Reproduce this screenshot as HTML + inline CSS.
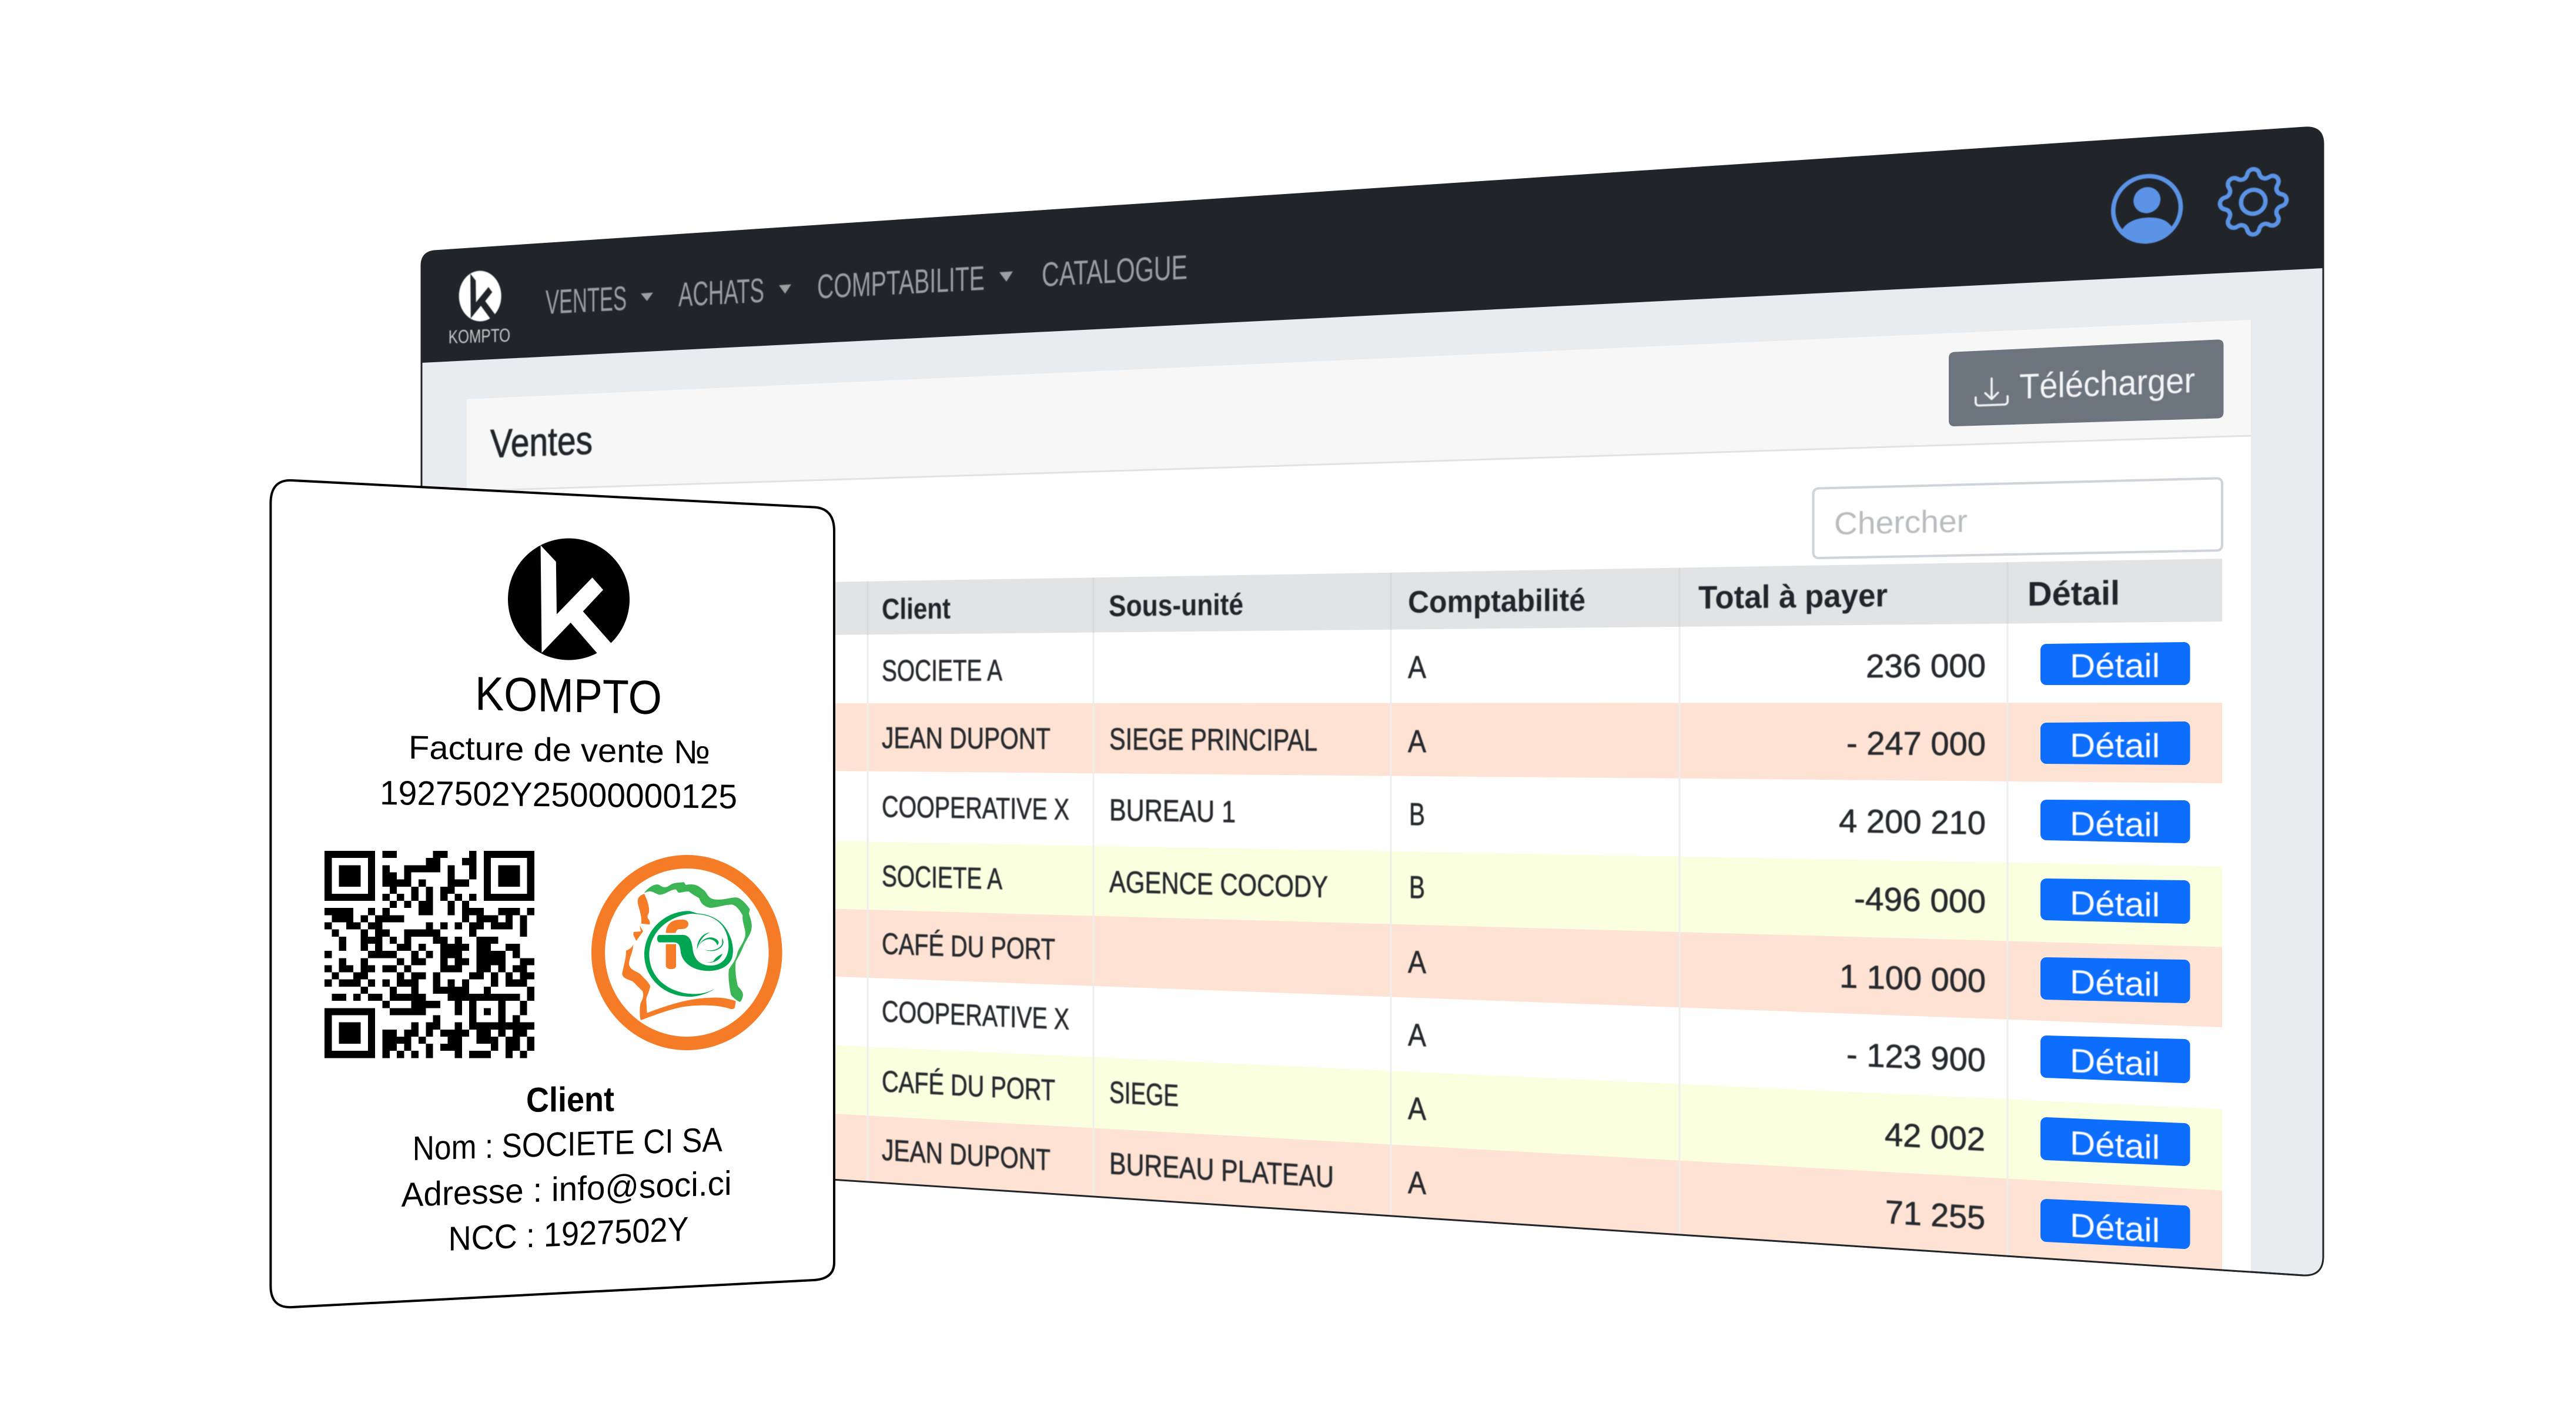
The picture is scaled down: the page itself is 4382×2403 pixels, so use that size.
<!DOCTYPE html>
<html lang="fr">
<head>
<meta charset="utf-8">
<title>Kompto</title>
<style>
html,body{margin:0;padding:0;background:#fff;width:4382px;height:2403px;overflow:hidden}
svg{display:block;position:absolute;left:0;top:0}
text{font-family:"Liberation Sans",Arial,sans-serif}
.soft{filter:blur(.9px)}
.nav{fill:#9c9ea0;font-size:58px}
.th{fill:#212529;font-weight:700}
.td{fill:#26292d;stroke:#26292d;stroke-width:.7px}
.btn{fill:#0d6efd;stroke:#0d6efd;stroke-width:20;stroke-linejoin:round}
.bt{fill:#fff;font-size:57px}
.cd{fill:#000}
</style>
</head>
<body>
<svg width="4382" height="2403" viewBox="0 0 4382 2403" xmlns="http://www.w3.org/2000/svg">
<!-- window -->
<path d="M717,452 Q717,430 738,427 L3921,217 Q3951,215 3952,243 L3952,2137 Q3952,2170 3919,2169 L717,1960 Z" fill="#e9ecef" stroke="#212529" stroke-width="3"/>
<path d="M717,452 Q717,430 738,427 L3921,217 Q3951,215 3952,243 L3952,456 L717,617 Z" fill="#212529"/>

<!-- card -->
<polygon points="794,679 3829,544 3829,2162 794,1965" fill="#fff"/>
<polygon points="794,679 3829,544 3829,741 794,835" fill="#f7f7f7"/>
<line x1="794" y1="835" x2="3829" y2="741" stroke="#e2e2e2" stroke-width="3"/>

<!-- table rows -->
<polygon points="1400,990 3780,950 3780,1057 1400,1080" fill="#e2e3e5"/>
<polygon points="1400,1196 3780,1195 3780,1332 1400,1311" fill="#fee2d3"/>
<polygon points="1400,1430 3780,1473.5 3780,1610.4 1400,1545" fill="#faffe0"/>
<polygon points="1400,1545 3780,1610.4 3780,1747 1400,1660" fill="#fee2d3"/>
<polygon points="1400,1776.5 3780,1886 3780,2024.6 1400,1893" fill="#faffe0"/>
<polygon points="1400,1893 3780,2024.6 3780,2159 1400,2006" fill="#fee2d3"/>

<!-- column lines -->
<g stroke-width="3">
<g stroke="#d9dadc">
<line x1="1476" y1="989" x2="1476" y2="1080"/>
<line x1="1860" y1="982.5" x2="1860" y2="1076"/>
<line x1="2366" y1="974" x2="2366" y2="1071"/>
<line x1="2857" y1="965.6" x2="2857" y2="1066"/>
<line x1="3415" y1="956" x2="3415" y2="1060.5"/>
</g>
<g stroke="#eeeeee">
<line x1="1476" y1="1080" x2="1476" y2="2009"/>
<line x1="1860" y1="1076" x2="1860" y2="2034"/>
<line x1="2366" y1="1071" x2="2366" y2="2067"/>
<line x1="2857" y1="1066" x2="2857" y2="2099"/>
<line x1="3415" y1="1060.5" x2="3415" y2="2135"/>
</g>
</g>
<!-- bottom border redraw -->
<line x1="1400" y1="2005" x2="3919" y2="2169" stroke="#212529" stroke-width="3"/>

<!-- download button -->
<path d="M3325,598.5 L3772,577.5 Q3782.5,577 3782.5,587 L3782.5,701 Q3782.5,711 3772,711.5 L3325,725 Q3315,725.3 3315,715 L3315,609 Q3315,599 3325,598.5 Z" fill="#6c757d"/>

<!-- search input -->
<path d="M3094,830.5 L3770,813.5 Q3780,813 3780,823 L3780,926 Q3780,936 3770,936.3 L3094,949 Q3084.5,949 3084.5,939 L3084.5,841 Q3084.5,831 3094,830.5 Z" fill="#fff" stroke="#ced4da" stroke-width="4"/>

<!-- detail buttons -->
<polygon class="btn" points="3481,1105 3715.5,1102 3715.5,1155 3481,1155"/>
<polygon class="btn" points="3481,1239 3715.5,1237 3715.5,1291 3481,1289"/>
<polygon class="btn" points="3481,1370 3715.5,1371 3715.5,1424 3481,1419"/>
<polygon class="btn" points="3481,1504 3715.5,1507 3715.5,1561 3481,1555"/>
<polygon class="btn" points="3481,1638 3715.5,1642 3715.5,1696 3481,1690"/>
<polygon class="btn" points="3481,1771 3715.5,1777 3715.5,1832 3481,1823"/>
<polygon class="btn" points="3481,1910 3715.5,1920 3715.5,1973 3481,1963"/>
<polygon class="btn" points="3481,2049 3715.5,2060 3715.5,2114 3481,2102"/>

<g class="soft">
<!-- nav logo -->
<ellipse cx="816.7" cy="503.5" rx="36" ry="43" fill="#fff"/>
<g transform="translate(816.7,503.5) scale(.35,.415) translate(-967,-1019)">
<polygon fill="#212529" points="919.6,927.2 945.8,955.3 947,1044.6 1007.6,982.1 1026,1003.1 991.7,1039.7 1040.2,1094.6 1017.2,1112.5 970.7,1058.9 921.5,1110.2"/>
</g>
<text transform="matrix(1 -.03 0 1 762.7 584)" font-size="32" fill="#c8c8c8" textLength="105.5" lengthAdjust="spacingAndGlyphs">KOMPTO</text>

<!-- nav items -->
<text class="nav" transform="matrix(1 -.052 0 1 928 534)" textLength="138" lengthAdjust="spacingAndGlyphs">VENTES</text>
<polygon points="1090,499 1111,497.5 1100.5,512" fill="#9c9ea0"/>
<text class="nav" transform="matrix(1 -.052 0 1 1154 521)" textLength="146" lengthAdjust="spacingAndGlyphs">ACHATS</text>
<polygon points="1325,485 1346,483.5 1335.5,499.5" fill="#9c9ea0"/>
<text class="nav" transform="matrix(1 -.052 0 1 1390 507.5)" textLength="285" lengthAdjust="spacingAndGlyphs">COMPTABILITE</text>
<polygon points="1700,463 1723,461.5 1712,479" fill="#9c9ea0"/>
<text class="nav" transform="matrix(1 -.052 0 1 1772 487)" textLength="248" lengthAdjust="spacingAndGlyphs">CATALOGUE</text>

<!-- profile + gear -->
<g fill="#5b93e6" transform="matrix(7.65 -.44 0 7.4 3591 299.5)">
<path d="M11 6a3 3 0 1 1-6 0 3 3 0 0 1 6 0z"/>
<path fill-rule="evenodd" d="M0 8a8 8 0 1 1 16 0A8 8 0 0 1 0 8zm8-7a7 7 0 0 0-5.468 11.37C3.242 11.226 4.805 10 8 10s4.757 1.225 5.468 2.37A7 7 0 0 0 8 1z"/>
</g>
<g fill="#5b93e6" transform="matrix(7.55 -.44 0 7.4 3772.6 287.5)">
<path d="M8 4.754a3.246 3.246 0 1 0 0 6.492 3.246 3.246 0 0 0 0-6.492zM5.754 8a2.246 2.246 0 1 1 4.492 0 2.246 2.246 0 0 1-4.492 0z"/>
<path d="M9.796 1.343c-.527-1.79-3.065-1.79-3.592 0l-.094.319a.873.873 0 0 1-1.255.52l-.292-.16c-1.64-.892-3.433.902-2.54 2.541l.159.292a.873.873 0 0 1-.52 1.255l-.319.094c-1.79.527-1.79 3.065 0 3.592l.319.094a.873.873 0 0 1 .52 1.255l-.16.292c-.892 1.64.901 3.434 2.541 2.54l.292-.159a.873.873 0 0 1 1.255.52l.094.319c.527 1.79 3.065 1.79 3.592 0l.094-.319a.873.873 0 0 1 1.255-.52l.292.16c1.64.893 3.434-.902 2.54-2.541l-.159-.292a.873.873 0 0 1 .52-1.255l.319-.094c1.79-.527 1.79-3.065 0-3.592l-.319-.094a.873.873 0 0 1-.52-1.255l.16-.292c.893-1.64-.902-3.433-2.541-2.54l-.292.159a.873.873 0 0 1-1.255-.52l-.094-.319zm-2.633.283c.246-.835 1.428-.835 1.674 0l.094.319a1.873 1.873 0 0 0 2.693 1.115l.291-.16c.764-.415 1.6.42 1.184 1.185l-.159.292a1.873 1.873 0 0 0 1.116 2.692l.318.094c.835.246.835 1.428 0 1.674l-.319.094a1.873 1.873 0 0 0-1.115 2.693l.16.291c.415.764-.42 1.6-1.185 1.184l-.291-.159a1.873 1.873 0 0 0-2.693 1.116l-.094.318c-.246.835-1.428.835-1.674 0l-.094-.319a1.873 1.873 0 0 0-2.692-1.115l-.292.16c-.764.415-1.6-.42-1.184-1.185l.159-.291A1.873 1.873 0 0 0 1.945 8.93l-.319-.094c-.835-.246-.835-1.428 0-1.674l.319-.094A1.873 1.873 0 0 0 3.06 4.377l-.16-.292c-.415-.764.42-1.6 1.185-1.184l.292.159a1.873 1.873 0 0 0 2.692-1.115l.094-.319z"/>
</g>

<!-- titles -->
<text transform="matrix(1 -.036 0 1 834 778)" font-size="68" fill="#212529" stroke="#212529" stroke-width="1" textLength="174" lengthAdjust="spacingAndGlyphs">Ventes</text>

<!-- download -->
<g fill="#f2f3f4" transform="matrix(3.62 -.135 0 3.5 3359 639.5)">
<path d="M.5 9.9a.5.5 0 0 1 .5.5v2.5a1 1 0 0 0 1 1h12a1 1 0 0 0 1-1v-2.5a.5.5 0 0 1 1 0v2.5a2 2 0 0 1-2 2H2a2 2 0 0 1-2-2v-2.5a.5.5 0 0 1 .5-.5z"/>
<path d="M7.646 11.854a.5.5 0 0 0 .708 0l3-3a.5.5 0 0 0-.708-.708L8.5 10.293V1.5a.5.5 0 0 0-1 0v8.793L5.354 8.146a.5.5 0 1 0-.708.708l3 3z"/>
</g>
<text transform="matrix(1 -.0365 0 1 3435 678)" font-size="60" fill="#f4f5f6" textLength="299" lengthAdjust="spacingAndGlyphs">Télécharger</text>
<text transform="matrix(1 -.0207 0 1 3120 909)" font-size="54" fill="#b9bcbf" textLength="227" lengthAdjust="spacingAndGlyphs">Chercher</text>

<!-- header -->
<text class="th" font-size="50" transform="matrix(1 -.012 0 1 1500 1053)" textLength="117" lengthAdjust="spacingAndGlyphs">Client</text>
<text class="th" font-size="51" transform="matrix(1 -.012 0 1 1886 1048)" textLength="229" lengthAdjust="spacingAndGlyphs">Sous-unité</text>
<text class="th" font-size="53" transform="matrix(1 -.012 0 1 2395 1042)" textLength="302" lengthAdjust="spacingAndGlyphs">Comptabilité</text>
<text class="th" font-size="55" transform="matrix(1 -.012 0 1 2889 1035)" textLength="322" lengthAdjust="spacingAndGlyphs">Total à payer</text>
<text class="th" font-size="58" transform="matrix(1 -.012 0 1 3449 1030)" textLength="157" lengthAdjust="spacingAndGlyphs">Détail</text>

<!-- client col -->
<g class="td" font-size="51">
<text transform="matrix(1 -.0034 0 1 1500 1158)" textLength="205" lengthAdjust="spacingAndGlyphs">SOCIETE A</text>
<text transform="matrix(1 .0059 0 1 1500 1272)" textLength="287" lengthAdjust="spacingAndGlyphs">JEAN DUPONT</text>
<text transform="matrix(1 .0155 0 1 1500 1389)" textLength="319" lengthAdjust="spacingAndGlyphs">COOPERATIVE X</text>
<text transform="matrix(1 .0248 0 1 1500 1507)" textLength="205" lengthAdjust="spacingAndGlyphs">SOCIETE A</text>
<text transform="matrix(1 .0341 0 1 1500 1622)" textLength="295" lengthAdjust="spacingAndGlyphs">CAFÉ DU PORT</text>
<text transform="matrix(1 .0433 0 1 1500 1737)" textLength="319" lengthAdjust="spacingAndGlyphs">COOPERATIVE X</text>
<text transform="matrix(1 .0529 0 1 1500 1856)" textLength="295" lengthAdjust="spacingAndGlyphs">CAFÉ DU PORT</text>
<text transform="matrix(1 .062 0 1 1500 1972.5)" textLength="287" lengthAdjust="spacingAndGlyphs">JEAN DUPONT</text>
</g>
<!-- sous-unité col -->
<g class="td" font-size="52">
<text transform="matrix(1 .0059 0 1 1887 1274.5)" textLength="354" lengthAdjust="spacingAndGlyphs">SIEGE PRINCIPAL</text>
<text transform="matrix(1 .0155 0 1 1887 1395)" textLength="215" lengthAdjust="spacingAndGlyphs">BUREAU 1</text>
<text transform="matrix(1 .0248 0 1 1887 1517)" textLength="372" lengthAdjust="spacingAndGlyphs">AGENCE COCODY</text>
<text transform="matrix(1 .0526 0 1 1887 1875)" textLength="118" lengthAdjust="spacingAndGlyphs">SIEGE</text>
<text transform="matrix(1 .0619 0 1 1887 1996)" textLength="382" lengthAdjust="spacingAndGlyphs">BUREAU PLATEAU</text>
</g>
<!-- comptabilité col -->
<g class="td" font-size="54">
<text transform="matrix(1 -.0034 0 1 2395 1153)" textLength="31" lengthAdjust="spacingAndGlyphs">A</text>
<text transform="matrix(1 .0058 0 1 2395 1279)" textLength="31" lengthAdjust="spacingAndGlyphs">A</text>
<text transform="matrix(1 .0155 0 1 2397 1403)" textLength="27" lengthAdjust="spacingAndGlyphs">B</text>
<text transform="matrix(1 .0248 0 1 2397 1527)" textLength="27" lengthAdjust="spacingAndGlyphs">B</text>
<text transform="matrix(1 .0339 0 1 2395 1654)" textLength="31" lengthAdjust="spacingAndGlyphs">A</text>
<text transform="matrix(1 .0432 0 1 2395 1778)" textLength="31" lengthAdjust="spacingAndGlyphs">A</text>
<text transform="matrix(1 .0525 0 1 2395 1903)" textLength="31" lengthAdjust="spacingAndGlyphs">A</text>
<text transform="matrix(1 .0619 0 1 2395 2029)" textLength="31" lengthAdjust="spacingAndGlyphs">A</text>
</g>
<!-- totals -->
<g class="td" font-size="56">
<text transform="matrix(1 -.0035 0 1 3174 1152)" textLength="204" lengthAdjust="spacingAndGlyphs">236 000</text>
<text transform="matrix(1 .0058 0 1 3141 1283)" textLength="237" lengthAdjust="spacingAndGlyphs">- 247 000</text>
<text transform="matrix(1 .0155 0 1 3128 1415)" textLength="250" lengthAdjust="spacingAndGlyphs">4 200 210</text>
<text transform="matrix(1 .0248 0 1 3154 1547)" textLength="224" lengthAdjust="spacingAndGlyphs">-496 000</text>
<text transform="matrix(1 .0339 0 1 3129 1679)" textLength="249" lengthAdjust="spacingAndGlyphs">1 100 000</text>
<text transform="matrix(1 .0433 0 1 3141 1812)" textLength="237" lengthAdjust="spacingAndGlyphs">- 123 900</text>
<text transform="matrix(1 .0527 0 1 3206 1948)" textLength="171" lengthAdjust="spacingAndGlyphs">42 002</text>
<text transform="matrix(1 .062 0 1 3207 2080)" textLength="170" lengthAdjust="spacingAndGlyphs">71 255</text>
</g>
<!-- button labels -->
<text class="bt" transform="matrix(1 -.0034 0 1 3521 1152)" textLength="153" lengthAdjust="spacingAndGlyphs">Détail</text>
<text class="bt" transform="matrix(1 .0059 0 1 3521 1287)" textLength="153" lengthAdjust="spacingAndGlyphs">Détail</text>
<text class="bt" transform="matrix(1 .0155 0 1 3521 1420)" textLength="153" lengthAdjust="spacingAndGlyphs">Détail</text>
<text class="bt" transform="matrix(1 .0246 0 1 3521 1555)" textLength="153" lengthAdjust="spacingAndGlyphs">Détail</text>
<text class="bt" transform="matrix(1 .0339 0 1 3521 1689)" textLength="153" lengthAdjust="spacingAndGlyphs">Détail</text>
<text class="bt" transform="matrix(1 .0432 0 1 3521 1823)" textLength="153" lengthAdjust="spacingAndGlyphs">Détail</text>
<text class="bt" transform="matrix(1 .0527 0 1 3521 1963)" textLength="153" lengthAdjust="spacingAndGlyphs">Détail</text>
<text class="bt" transform="matrix(1 .0624 0 1 3521 2103)" textLength="153" lengthAdjust="spacingAndGlyphs">Détail</text>
</g>

<!-- invoice card -->
<path d="M460.4,856 Q460.4,815 497,817 L1384,862.5 Q1419,864 1419,903 L1419,2147 Q1419,2175 1384,2177 L497,2223 Q460.4,2225 460.4,2187 Z" fill="#fff" stroke="#000" stroke-width="4"/>

<circle cx="967.5" cy="1019" r="103.5" fill="#000"/>
<polygon fill="#fff" points="919.6,927.2 945.8,955.3 947,1044.6 1007.6,982.1 1026,1003.1 991.7,1039.7 1040.2,1094.6 1017.2,1112.5 970.7,1058.9 921.5,1110.2"/>

<text class="cd" transform="matrix(1 .0234 0 1 808 1207)" font-size="81" textLength="318" lengthAdjust="spacingAndGlyphs">KOMPTO</text>
<text class="cd" transform="matrix(1 .017 0 1 695 1290)" font-size="56" textLength="513" lengthAdjust="spacingAndGlyphs">Facture de vente №</text>
<text class="cd" transform="matrix(1 .011 0 1 646 1368)" font-size="58" textLength="608" lengthAdjust="spacingAndGlyphs">1927502Y25000000125</text>

<!-- QR -->
<g transform="matrix(12.31 0 0 12.15 552 1447)" shape-rendering="crispEdges">
<path fill="#000" fill-rule="evenodd" d="M0 0h7v7h-7zM1 1v5h5v-5zM2 2h3v3h-3zM22 0h7v7h-7zM23 1v5h5v-5zM24 2h3v3h-3zM0 22h7v7h-7zM1 23v5h5v-5zM2 24h3v3h-3z"/>
<path fill="none" stroke="#000" stroke-width="1" d="M8 .5h2M15 .5h2M20 .5h1M14 1.5h2M19 1.5h2M8 2.5h1M11 2.5h5M17 2.5h1M20 2.5h1M8 3.5h2M11 3.5h1M17 3.5h1M20 3.5h1M8 4.5h4M13 4.5h1M17 4.5h3M9 5.5h1M12 5.5h1M14 5.5h1M16 5.5h2M8 6.5h1M10 6.5h1M12 6.5h1M14 6.5h1M16 6.5h1M18 6.5h1M20 6.5h1M9 7.5h1M11 7.5h1M13 7.5h2M17 7.5h1M19 7.5h1M0 8.5h4M6 8.5h1M8 8.5h1M13 8.5h2M17 8.5h1M19 8.5h3M24 8.5h3M28 8.5h1M1 9.5h3M5 9.5h1M7 9.5h4M19 9.5h1M21 9.5h3M25 9.5h1M27 9.5h1M0 10.5h1M3 10.5h2M6 10.5h2M14 10.5h1M16 10.5h1M18 10.5h1M20 10.5h2M23 10.5h3M27 10.5h1M1 11.5h1M5 11.5h1M7 11.5h2M11 11.5h5M20 11.5h1M27 11.5h1M2 12.5h1M5 12.5h3M9 12.5h1M11 12.5h1M15 12.5h2M18 12.5h1M21 12.5h3M2 13.5h1M5 13.5h1M7 13.5h1M10 13.5h2M13 13.5h1M16 13.5h4M21 13.5h2M25 13.5h2M0 14.5h1M6 14.5h4M12 14.5h1M14 14.5h1M16 14.5h3M21 14.5h4M26 14.5h1M2 15.5h1M5 15.5h1M10 15.5h1M12 15.5h2M16 15.5h1M18 15.5h2M21 15.5h4M27 15.5h2M0 16.5h1M2 16.5h2M5 16.5h2M8 16.5h2M11 16.5h1M16 16.5h3M21 16.5h2M24 16.5h1M26 16.5h2M1 17.5h1M4 17.5h2M10 17.5h1M12 17.5h2M15 17.5h1M20 17.5h2M23 17.5h1M25 17.5h1M27 17.5h2M0 18.5h1M2 18.5h3M6 18.5h1M8 18.5h1M10 18.5h3M15 18.5h1M17 18.5h1M19 18.5h1M23 18.5h1M25 18.5h3M5 19.5h1M9 19.5h1M12 19.5h1M15 19.5h5M22 19.5h1M28 19.5h1M1 20.5h2M4 20.5h1M6 20.5h2M9 20.5h5M17 20.5h10M28 20.5h1M8 21.5h1M12 21.5h4M18 21.5h1M20 21.5h1M24 21.5h1M27 21.5h1M9 22.5h5M18 22.5h1M20 22.5h1M22 22.5h1M24 22.5h1M27 22.5h1M15 23.5h1M20 23.5h1M24 23.5h1M26 23.5h1M12 24.5h1M14 24.5h2M18 24.5h1M20 24.5h9M8 25.5h2M11 25.5h2M14 25.5h1M16 25.5h4M21 25.5h2M24 25.5h1M26 25.5h2M8 26.5h4M13 26.5h1M17 26.5h2M21 26.5h3M25 26.5h2M28 26.5h1M8 27.5h2M11 27.5h1M14 27.5h1M16 27.5h3M23 27.5h1M25 27.5h2M28 27.5h1M8 28.5h1M10 28.5h1M12 28.5h1M14 28.5h1M18 28.5h1M20 28.5h3M25 28.5h1M27 28.5h1"/>
</g>

<!-- FE logo -->
<ellipse cx="1168.3" cy="1620" rx="150.8" ry="154.5" fill="none" stroke="#f57b27" stroke-width="23"/>
<g transform="translate(1000,1440) scale(.33333)">
<path fill="#3bb554" d="M288,235 C310,205 345,185 365,195 C385,210 400,210 420,195 C440,180 470,185 490,180 L500,195 C520,190 550,190 570,205 C590,220 600,225 610,245 C625,270 650,272 690,268 C720,265 745,255 765,260 C790,270 815,300 827,320 L822,340 C830,370 840,390 835,420 C830,450 810,470 795,505 C785,530 770,560 755,585 C750,620 755,670 765,710 C775,725 790,735 792,755 C790,775 782,790 775,792 C760,785 740,770 730,755 C720,700 715,660 720,625 C735,600 755,580 762,545 C770,515 790,500 802,460 C810,420 785,390 790,350 C775,325 760,300 735,295 C700,295 660,310 625,312 C590,305 575,285 568,262 C545,250 530,240 515,228 C490,228 470,238 460,232 L450,218 C425,215 395,245 365,245 C345,240 330,225 310,228 C300,230 295,235 288,235 Z"/>
<path fill="#f57b27" d="M288,240 C305,275 315,310 312,335 C305,350 300,360 310,370 C318,380 318,390 315,397 L272,392 C278,360 262,320 255,290 C250,260 265,248 288,240 Z"/>
<path fill="#f57b27" d="M265,402 L282,432 L247,480 L232,450 L233,435 L270,432 Z"/>
<path fill="#f57b27" d="M232,498 C230,540 210,570 210,600 C215,630 250,635 268,650 C285,670 310,690 318,710 C318,730 300,760 298,780 L302,848 C400,810 520,770 640,770 C680,768 720,775 755,788 L750,820 C745,830 730,830 720,825 C650,805 560,805 480,818 C400,835 340,860 270,885 C262,860 265,810 270,795 C285,770 285,750 278,735 C250,710 235,690 225,685 C200,675 175,670 175,645 C185,600 195,570 195,530 C210,525 225,515 232,498 Z"/>
<path fill="#f57b27" d="M398,440 C398,395 430,372 470,372 L490,372 C510,375 518,390 510,405 C505,415 495,420 480,420 L465,420 C455,422 448,432 448,440 Z"/>
<path fill="#f57b27" d="M398,497 L450,497 L450,610 C448,628 405,630 398,610 Z"/>
<path fill="#00a651" d="M363,450 L490,450 C520,455 530,480 535,520 C540,570 570,608 630,606 C670,605 720,580 718,500 C715,410 660,355 570,345 L520,340 C590,335 660,355 700,410 C735,460 750,520 735,570 C715,620 650,640 590,632 C530,625 485,590 475,545 C470,510 470,490 440,488 L365,488 C350,485 350,455 363,450 Z"/>
<path fill="#00a651" d="M520,328 C400,325 290,420 288,550 C290,680 400,770 530,765 C570,763 620,745 647,725 C610,745 570,755 520,750 C410,740 315,670 313,550 C315,430 420,340 560,340 Z"/>
<path fill="#00a651" d="M557,525 C555,480 585,440 625,437 C590,450 570,480 557,525 Z"/>
<path fill="#00a651" d="M565,505 C585,465 630,450 660,475 C672,485 668,495 660,503 C655,480 625,462 595,478 C580,485 572,495 565,505 Z"/>
<path fill="#00a651" d="M595,525 C630,535 670,525 685,497 L685,465 C700,490 690,515 655,528 C635,535 610,532 595,525 Z"/>
<path fill="#00a651" d="M600,590 C640,595 670,585 688,545 C670,555 650,565 640,585 C625,590 610,590 600,590 Z"/>
</g>

<text class="cd" transform="matrix(1 -.008 0 1 895 1890.7)" font-size="59" font-weight="700" textLength="150" lengthAdjust="spacingAndGlyphs">Client</text>
<text class="cd" transform="matrix(1 -.029 0 1 701.7 1973)" font-size="58" textLength="527" lengthAdjust="spacingAndGlyphs">Nom : SOCIETE CI SA</text>
<text class="cd" transform="matrix(1 -.036 0 1 682.6 2052)" font-size="58" textLength="562" lengthAdjust="spacingAndGlyphs">Adresse : info@soci.ci</text>
<text class="cd" transform="matrix(1 -.0416 0 1 762.6 2126.7)" font-size="58" textLength="409" lengthAdjust="spacingAndGlyphs">NCC : 1927502Y</text>
</svg>
</body>
</html>
